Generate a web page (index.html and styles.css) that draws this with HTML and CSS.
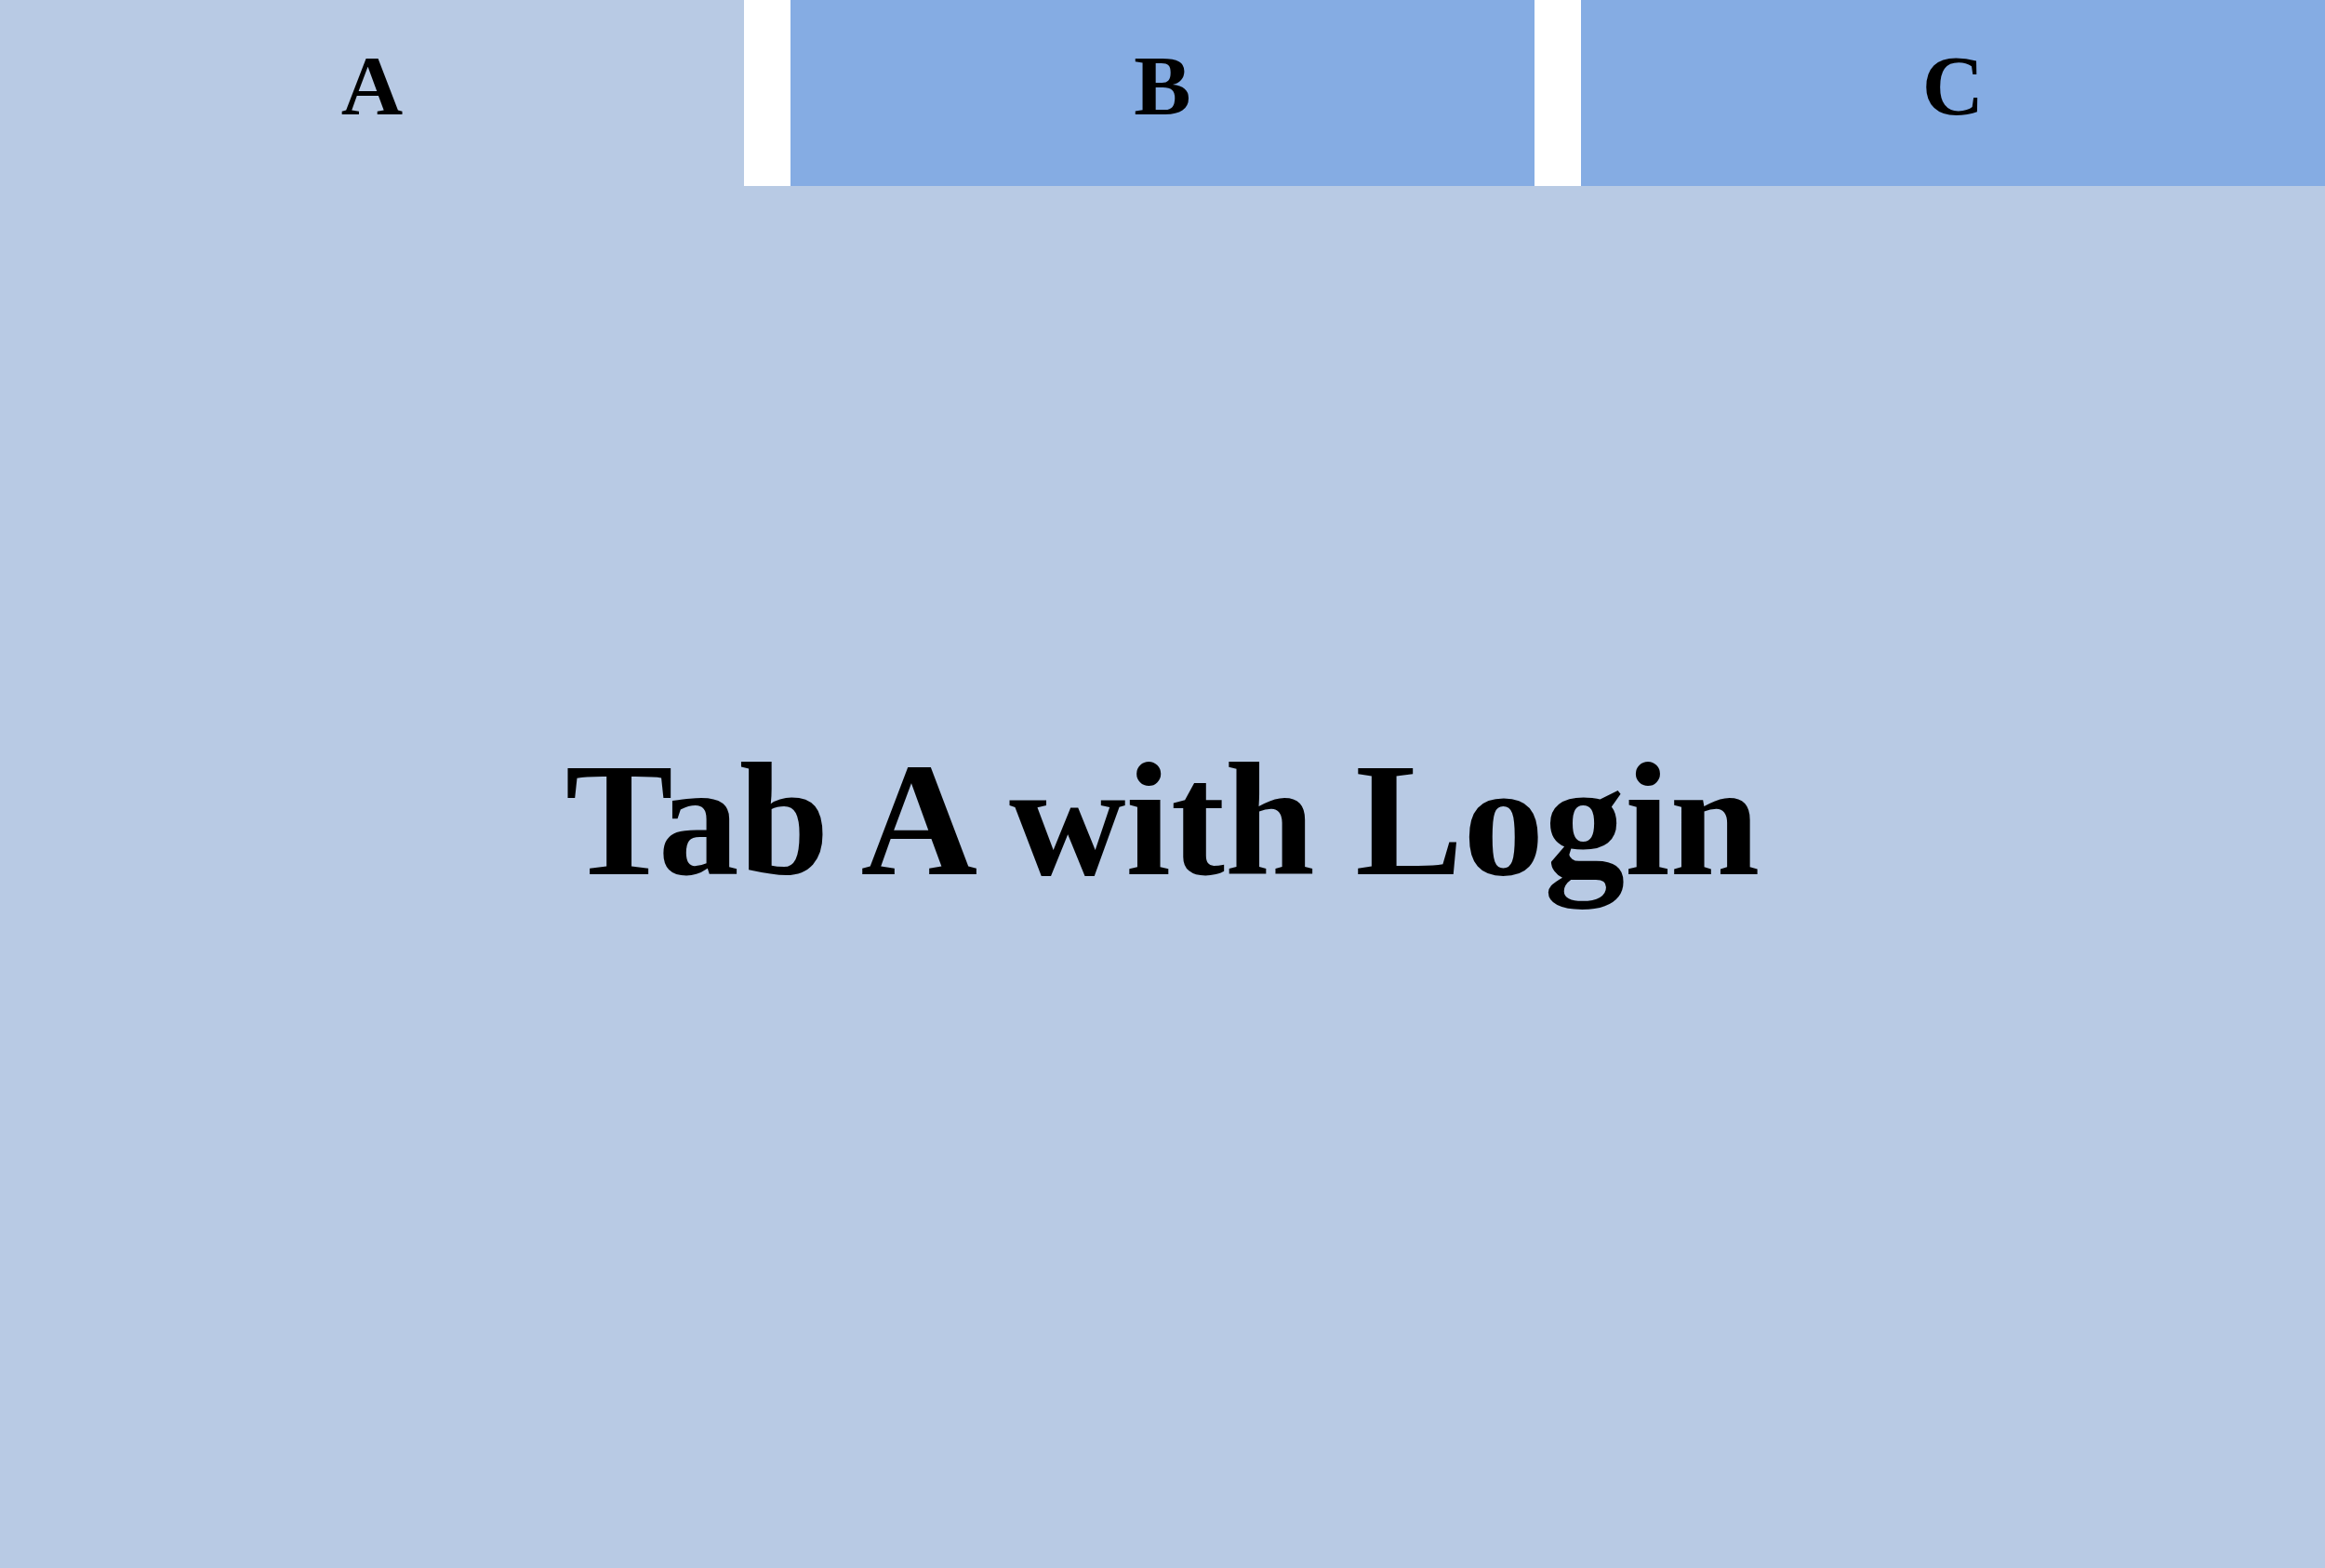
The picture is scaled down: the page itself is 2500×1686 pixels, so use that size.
FILE: index.html
```html
<!DOCTYPE html>
<html>
<head>
<meta charset="utf-8">
<link rel="stylesheet" href="styles.css">
</head>
<body>
<div class="tabs">
  <div class="tab active">A</div>
  <div class="tab">B</div>
  <div class="tab">C</div>
</div>
<main class="panel">
  <h1 class="title">Tab A with Login</h1>
</main>
</body>
</html>
```
FILE: styles.css
```css
html, body {
  margin: 0;
  padding: 0;
  height: 100%;
}
body {
  background: #b8cae4;
  font-family: "Liberation Serif", "DejaVu Serif", serif;
  color: #000;
  display: flex;
  flex-direction: column;
  overflow: hidden;
}
.tabs {
  display: flex;
  gap: 50px;
  height: 200px;
  background: #ffffff;
  flex: 0 0 auto;
}
.tab {
  flex: 1 1 0;
  display: flex;
  align-items: center;
  justify-content: center;
  background: #85ace3;
  font-weight: bold;
  font-size: 92px;
  padding-bottom: 16px;
  box-sizing: border-box;
}
.tab.active {
  background: #b8cae4;
}
.panel {
  flex: 1 1 auto;
  display: flex;
  align-items: center;
  justify-content: center;
}
.title {
  margin: 0 0 122px 0;
  font-size: 174px;
  font-weight: bold;
}
```
